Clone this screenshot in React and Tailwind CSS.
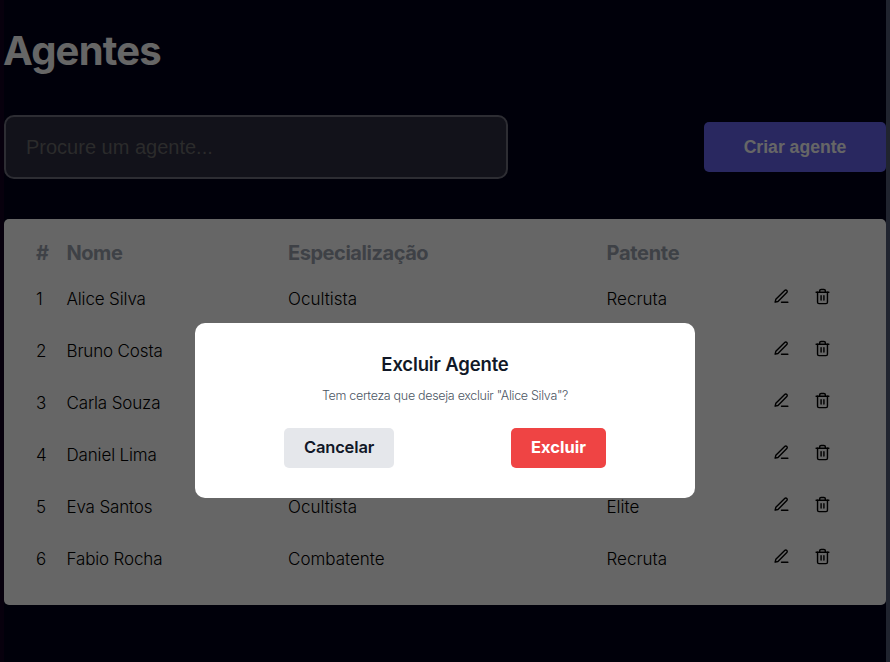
import { FiEdit3, FiTrash2 } from "react-icons/fi";

const agents = [
  ["Alice Silva", "Ocultista", "Recruta"],
  ["Bruno Costa", "", ""],
  ["Carla Souza", "", ""],
  ["Daniel Lima", "", ""],
  ["Eva Santos", "Ocultista", "Elite"],
  ["Fabio Rocha", "Combatente", "Recruta"],
];

const columns = "grid grid-cols-[30.5px_221.5px_318.5px_166.5px_1fr]";

export default function App() {
  return (
    <div className="relative h-[662px] w-[890px] overflow-hidden font-['Inter',sans-serif]">
      <div className="h-full border-x-4 border-l-[#120022] border-r-[#525a75] bg-[#00001a]">
        <h1 className="-ml-px pt-[20px] text-[40px] leading-[62px] font-bold tracking-[-0.8px] text-white">Agentes</h1>
        <div className="mt-[33px] flex items-center justify-between">
          <input
            className="h-16 w-[504px] rounded-[10px] border-2 border-[#72727f] bg-[#2d2d43] px-5 font-['Liberation_Sans',Arial,sans-serif] text-[20px] placeholder:text-[#6b6b6b]"
            placeholder="Procure um agente..."
          />
          <button className="h-[50px] w-[182px] rounded-[5px] bg-[#6664f1] font-['Liberation_Sans',Arial,sans-serif] text-[17.6px] font-bold text-white">
            Criar agente
          </button>
        </div>
        <section className="mt-10 h-[386px] rounded-[5px] bg-white px-8 pt-[14px]">
          <div className={`${columns} h-10 items-center text-[20px] font-bold tracking-[-0.45px] text-[#9ca3af]`}>
            <span>#</span>
            <span>Nome</span>
            <span>Especialização</span>
            <span className="tracking-[-0.3px]">Patente</span>
          </div>
          {agents.map(([name, role, rank], i) => (
            <div key={name} className={`${columns} h-[52px] items-center text-[17px] font-light text-black`}>
              <span className="pt-0.5">{i + 1}</span>
              <span className="pt-0.5 tracking-[-0.15px]">{name}</span>
              <span className="pt-0.5">{role}</span>
              <span className="pt-0.5">{rank}</span>
              <span className="flex gap-6 pb-[5px]">
                <FiEdit3 size={17} />
                <FiTrash2 size={17} />
              </span>
            </div>
          ))}
        </section>
      </div>
      <div className="absolute inset-0 flex items-start justify-center bg-black/60 pt-[323px]">
        <div className="flex h-[175px] w-[500px] flex-col items-center rounded-[10px] bg-white pt-[29px]">
          <h2 className="text-[18.5px] leading-6 font-semibold tracking-[-0.15px] text-[#111827]">Excluir Agente</h2>
          <p className="mt-[10px] text-[12.5px] leading-5 font-light tracking-[-0.31px] text-[#4b5563]">
            Tem certeza que deseja excluir "Alice Silva"?
          </p>
          <div className="mt-[22px] flex w-[322px] justify-between">
            <button className="h-10 w-[110px] rounded-[5px] bg-[#e5e7eb] pb-0.5 text-[16.5px] font-semibold tracking-[-0.15px] text-[#111827]">Cancelar</button>
            <button className="h-10 w-[95px] rounded-[5px] bg-[#ef4444] pb-px text-[16.5px] font-bold text-white">Excluir</button>
          </div>
        </div>
      </div>
    </div>
  );
}
